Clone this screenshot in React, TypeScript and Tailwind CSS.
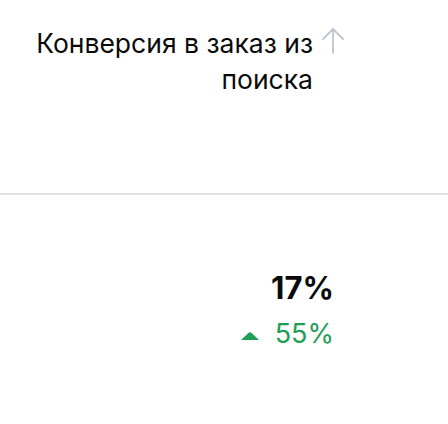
import React from "react";

export default function App() {
  return (
    <div className="w-[448px] h-[424px] bg-white font-['Inter',sans-serif] text-[#0a0a0a]">
      <div className="h-[195px] border-b-2 border-[#e2e2e2] flex justify-end pr-[103px] pt-[25px]">
        <div className="flex items-start gap-[8px]">
          <div className="text-right text-[26.5px] leading-[36px] max-w-[300px]">
            Конверсия в заказ из поиска
          </div>
          <svg width="24" height="28" viewBox="0 0 24 28" className="mt-[2px]" fill="none" stroke="#c0c4cf" strokeWidth="1.8" strokeLinecap="round" strokeLinejoin="round">
            <path d="M12 2 L12 26" />
            <path d="M2 12 L12 2 L22 12" />
          </svg>
        </div>
      </div>
      <div className="flex flex-col items-end pr-[114px] pt-[75px]">
        <div className="text-[31px] leading-[36px] font-bold">17%</div>
        <div className="flex items-center gap-[16px] mt-[12px] text-[#1f9e58]">
          <svg width="18" height="8" viewBox="0 0 18 8" className="mt-[3px]">
            <path d="M0 8 L7.4 0.9 Q9 -0.6 10.6 0.9 L18 8 Z" fill="#1f9e58" />
          </svg>
          <span className="text-[27px] leading-[32px]">55%</span>
        </div>
      </div>
    </div>
  );
}
